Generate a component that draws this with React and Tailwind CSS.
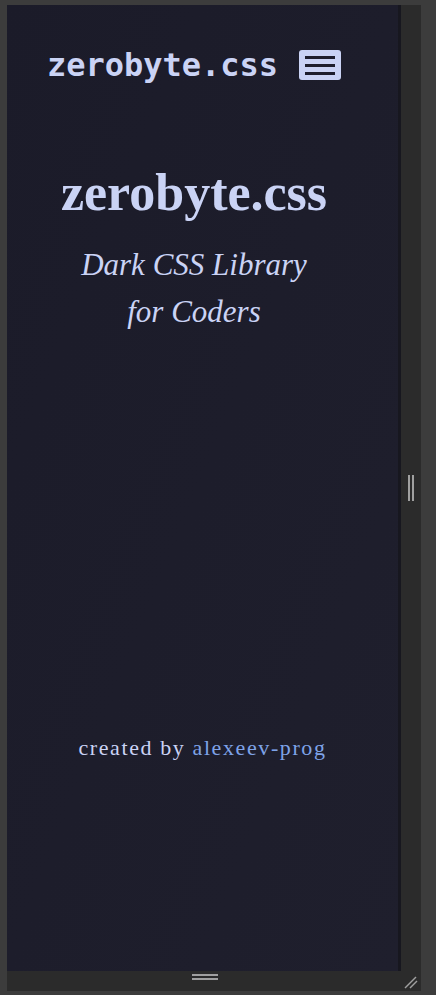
export default function App() {
  return (
    <div className="w-[436px] h-[995px] bg-[#3c3c3c] overflow-hidden relative">
      <div className="absolute left-[7px] top-[5px] w-[414px] h-[986px] bg-[#2b2b2b]">
        <div className="flex h-[966px]">
          <div className="w-[391px] h-full bg-gradient-to-br from-[#1b1b29] to-[#1f1f2d] flex flex-col">
            <div className="w-[374px] flex justify-center items-center gap-[21px] pt-[44px]">
              <span
                className="text-[32px] leading-none font-bold text-[#cad3f5]"
                style={{ fontFamily: '"DejaVu Sans Mono", monospace' }}
              >
                zerobyte.css
              </span>
              <div className="w-[42px] h-[30px] rounded-[3px] bg-[#cad3f5] flex flex-col items-center justify-center gap-[5px]">
                <div className="w-[30px] h-[3px] bg-[#1e1e2e]" />
                <div className="w-[30px] h-[3px] bg-[#1e1e2e]" />
                <div className="w-[30px] h-[3px] bg-[#1e1e2e]" />
              </div>
            </div>
            <div
              className="w-[374px] flex flex-col items-center text-[#cad3f5] mt-[82px]"
              style={{ fontFamily: '"Liberation Serif", serif' }}
            >
              <h1 className="text-[52px] leading-[60px] font-bold">zerobyte.css</h1>
              <p className="italic text-[31px] leading-[47px] text-center w-[260px] mt-[18px]">
                Dark CSS Library for Coders
              </p>
            </div>
            <div
              className="text-center text-[22px] leading-[30px] tracking-[1.6px] text-[#cad3f5] mt-[398px]"
              style={{ fontFamily: '"Liberation Serif", serif' }}
            >
              created by <span className="text-[#7ea3e8]">alexeev-prog</span>
            </div>
          </div>
          <div className="w-[3px] h-full bg-[#17171f]" />
          <div className="flex-1 h-full flex items-center justify-center">
            <div className="flex gap-[2px] h-[26px]">
              <div className="w-[2px] h-full bg-[#a0a0a0]" />
              <div className="w-[2px] h-full bg-[#a0a0a0]" />
            </div>
          </div>
        </div>
        <div className="h-[20px] relative flex items-center">
          <div className="absolute left-[185px] top-[3px] w-[26px] flex flex-col gap-[2px]">
            <div className="h-[2px] bg-[#a0a0a0]" />
            <div className="h-[2px] bg-[#a0a0a0]" />
          </div>
          <svg className="absolute right-[3px] top-[4px]" width="14" height="14" viewBox="0 0 14 14">
            <line x1="1" y1="13" x2="12" y2="2" stroke="#a0a0a0" strokeWidth="1.5" />
            <line x1="6" y1="13" x2="13" y2="6" stroke="#a0a0a0" strokeWidth="1.5" />
          </svg>
        </div>
      </div>
    </div>
  );
}
